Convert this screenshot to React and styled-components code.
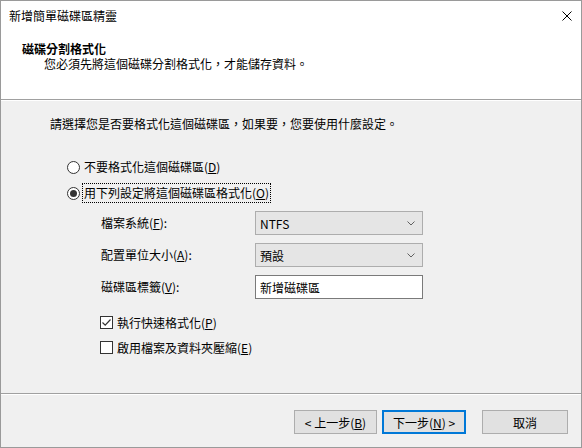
import React from 'react'
import styled, { createGlobalStyle } from 'styled-components'

const GlobalStyle = createGlobalStyle`
  html, body {
    margin: 0;
    padding: 0;
    background: #ffffff;
  }
  body {
    font-family: "Noto Sans CJK TC", "Noto Sans", sans-serif;
    font-size: 12px;
    color: #000000;
  }
  * {
    box-sizing: border-box;
  }
`

const Window = styled.div`
  width: 582px;
  height: 448px;
  display: flex;
  flex-direction: column;
  border: 1px solid #9a9a9a;
  background: #ffffff;
`

const TitleBar = styled.div`
  height: 30px;
  display: flex;
  align-items: center;
  justify-content: space-between;
  padding: 0 9px 0 8px;
`

const Title = styled.span`
  line-height: 14px;
`

const Header = styled.div`
  height: 68px;
  padding: 11px 0 0 21px;
`

const Heading = styled.div`
  font-weight: 700;
  line-height: 14px;
`

const Subtitle = styled.div`
  line-height: 14px;
  margin-top: 1px;
  padding-left: 22px;
`

const Rule = styled.div`
  height: 2px;
  border-top: 1px solid #a0a0a0;
  border-bottom: 1px solid #ffffff;
`

const Body = styled.div`
  flex: 1;
  background: #f0f0f0;
  padding: 15px 0 0 49px;
`

const Instruction = styled.div`
  line-height: 16px;
`

const Options = styled.div`
  margin-top: 25px;
  display: flex;
  flex-direction: column;
  gap: 6px;
  padding-left: 17px;
`

const OptionRow = styled.div`
  height: 20px;
  display: flex;
  align-items: center;
`

const RadioDot = styled.span`
  width: 13px;
  height: 13px;
  border-radius: 50%;
  border: 1px solid #333333;
  background: #ffffff;
  display: flex;
  align-items: center;
  justify-content: center;
  &::after {
    content: '';
    width: 7px;
    height: 7px;
    border-radius: 50%;
    background: ${({ checked }) => (checked ? '#333333' : 'transparent')};
  }
`

const OptionLabel = styled.span`
  margin-left: 2px;
  padding: 1px 1px;
  line-height: 16px;
  border: 1px dotted ${({ focused }) => (focused ? '#000000' : 'transparent')};
`

const Settings = styled.div`
  margin-top: 8px;
  padding-left: 51px;
  display: grid;
  grid-template-columns: 154px 168px;
  grid-auto-rows: 24px;
  row-gap: 8px;
  align-items: center;
`

const FieldLabel = styled.span`
  line-height: 16px;
`

const Combo = styled.div`
  height: 24px;
  display: flex;
  align-items: center;
  justify-content: space-between;
  padding: 0 7px 0 4px;
  background: #e5e5e5;
  border: 1px solid #adadad;
`

const TextBox = styled.div`
  height: 24px;
  display: flex;
  align-items: center;
  padding-left: 4px;
  background: #ffffff;
  border: 1px solid #7a7a7a;
`

const Checks = styled.div`
  margin-top: 13px;
  padding-left: 50px;
  display: flex;
  flex-direction: column;
  gap: 5px;
`

const CheckRow = styled.div`
  height: 20px;
  display: flex;
  align-items: center;
  gap: 4px;
`

const CheckBox = styled.span`
  width: 13px;
  height: 13px;
  border: 1px solid #333333;
  background: #ffffff;
  display: flex;
  align-items: center;
  justify-content: center;
`

const Footer = styled.div`
  height: 54px;
  background: #f0f0f0;
  border-top: 1px solid #a0a0a0;
  display: flex;
  flex-direction: column;
`

const FooterHighlight = styled.div`
  height: 1px;
  background: #ffffff;
`

const ButtonRow = styled.div`
  display: flex;
  justify-content: flex-end;
  padding: 15px 13px 0 0;
`

const Button = styled.button`
  width: ${({ w }) => w}px;
  height: 24px;
  margin-left: ${({ gap }) => gap}px;
  padding: 0;
  font-family: inherit;
  font-size: 12px;
  color: #000000;
  background: #e1e1e1;
  border: ${({ primary }) => (primary ? '2px solid #0078d7' : '1px solid #adadad')};
  display: flex;
  align-items: center;
  justify-content: center;
`

const CloseIcon = () => (
  <svg width="10" height="10" viewBox="0 0 10 10">
    <path d="M0.5 0.5 L9.5 9.5 M9.5 0.5 L0.5 9.5" stroke="#000" strokeWidth="1" fill="none" />
  </svg>
)

const Chevron = () => (
  <svg width="8" height="5" viewBox="0 0 8 5">
    <path d="M0.5 0.5 L4 4 L7.5 0.5" stroke="#606060" strokeWidth="1" fill="none" />
  </svg>
)

const CheckMark = () => (
  <svg width="11" height="11" viewBox="0 0 11 11">
    <path d="M1.5 5.5 L4.2 8.2 L9.5 2.5" stroke="#333" strokeWidth="1.2" fill="none" />
  </svg>
)

export default function App() {
  return (
    <>
      <GlobalStyle />
      <Window>
        <TitleBar>
          <Title>新增簡單磁碟區精靈</Title>
          <CloseIcon />
        </TitleBar>
        <Header>
          <Heading>磁碟分割格式化</Heading>
          <Subtitle>您必須先將這個磁碟分割格式化，才能儲存資料。</Subtitle>
        </Header>
        <Rule />
        <Body>
          <Instruction>請選擇您是否要格式化這個磁碟區，如果要，您要使用什麼設定。</Instruction>
          <Options>
            <OptionRow>
              <RadioDot />
              <OptionLabel>不要格式化這個磁碟區(<u>D</u>)</OptionLabel>
            </OptionRow>
            <OptionRow>
              <RadioDot checked />
              <OptionLabel focused>用下列設定將這個磁碟區格式化(<u>O</u>)</OptionLabel>
            </OptionRow>
          </Options>
          <Settings>
            <FieldLabel>檔案系統(<u>F</u>):</FieldLabel>
            <Combo>
              <span>NTFS</span>
              <Chevron />
            </Combo>
            <FieldLabel>配置單位大小(<u>A</u>):</FieldLabel>
            <Combo>
              <span>預設</span>
              <Chevron />
            </Combo>
            <FieldLabel>磁碟區標籤(<u>V</u>):</FieldLabel>
            <TextBox>新增磁碟區</TextBox>
          </Settings>
          <Checks>
            <CheckRow>
              <CheckBox>
                <CheckMark />
              </CheckBox>
              <span>執行快速格式化(<u>P</u>)</span>
            </CheckRow>
            <CheckRow>
              <CheckBox />
              <span>啟用檔案及資料夾壓縮(<u>E</u>)</span>
            </CheckRow>
          </Checks>
        </Body>
        <Footer>
          <FooterHighlight />
          <ButtonRow>
            <Button w={83} gap={0}>&lt; 上一步(<u>B</u>)</Button>
            <Button w={84} gap={5} primary>下一步(<u>N</u>) &gt;</Button>
            <Button w={86} gap={16}>取消</Button>
          </ButtonRow>
        </Footer>
      </Window>
    </>
  )
}
